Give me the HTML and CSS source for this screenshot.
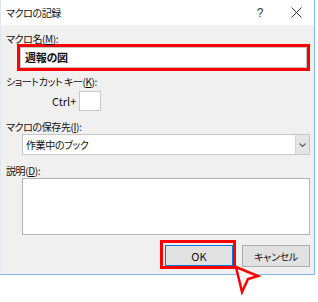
FILE: index.html
```html
<!DOCTYPE html>
<html lang="ja">
<head>
    <meta charset="UTF-8">
    <title>マクロの記録</title>
    <link rel="stylesheet" href="styles.css">
</head>
<body>
    <div class="window">
        <div class="titlebar">
            <span class="title">マクロの記録</span>
            <span class="help">?</span>
            <svg class="close" width="11" height="11" viewBox="0 0 11 11">
                <path d="M0.5 0.5 L10.5 10.5 M10.5 0.5 L0.5 10.5" stroke="#333" stroke-width="1" fill="none"/>
            </svg>
        </div>
        <div class="content">
            <div class="label">マクロ名(<u>M</u>):</div>
            <div class="mark-name">
                <div class="name-box">週報の図</div>
            </div>

            <div class="label label-key">ショートカット キー(<u>K</u>):</div>
            <div class="ctrl-row">
                <span class="ctrl-text">Ctrl+</span>
                <div class="key-box"></div>
            </div>

            <div class="label label-store">マクロの保存先(<u>I</u>):</div>
            <div class="select">
                <span class="select-text">作業中のブック</span>
                <span class="select-btn">
                    <svg width="7" height="4" viewBox="0 0 7 4">
                        <path d="M0.5 0.5 L3.5 3.5 L6.5 0.5" stroke="#606060" stroke-width="1.2" fill="none"/>
                    </svg>
                </span>
            </div>

            <div class="label label-desc">説明(<u>D</u>):</div>
            <div class="desc-box"></div>

            <div class="buttons">
                <div class="mark-ok">
                    <button class="btn btn-ok">OK</button>
                </div>
                <button class="btn btn-cancel">キャンセル</button>
            </div>
        </div>
        <svg class="pointer" width="28" height="30" viewBox="0 0 28 30">
            <polygon points="2,2 24,11 14,14 8,27" fill="#fff" stroke="#f00" stroke-width="2.5" stroke-linejoin="miter"/>
        </svg>
    </div>
</body>
</html>
```

FILE: styles.css
```css
html,
body {
    height: 302px;
}

body {
    margin: 0;
    background-color: #fff;
    font-family: "Noto Sans CJK JP", "Noto Sans", sans-serif;
    font-size: 10px;
    letter-spacing: -0.4px;
    font-feature-settings: "palt";
    color: #111;
}

.window {
    position: relative;
    width: 315px;
    height: 275px;
    box-sizing: border-box;
    border: 1px solid #7fb8ea;
    border-left-color: #dce8f5;
    border-top: none;
    background-color: #f0f0f0;
}

.titlebar {
    display: flex;
    align-items: center;
    height: 25px;
    background-color: #fff;
    padding-left: 5px;
}

.title {
    flex: 1;
}

.help {
    font-family: "Liberation Sans", sans-serif;
    font-size: 12px;
    color: #333;
    margin-right: 28px;
}

.close {
    margin-right: 12px;
}

.content {
    padding-left: 5px;
    padding-right: 4px;
}

.label {
    line-height: 11px;
    padding-top: 8px;
}

.mark-name {
    margin-left: 11px;
    border: 3px solid #f00;
}

.name-box {
    height: 19px;
    border: 1px solid #c4c4c4;
    background-color: #fff;
    font-weight: bold;
    font-size: 11px;
    letter-spacing: -0.3px;
    line-height: 19px;
    padding-left: 4px;
}

.label-key {
    padding-top: 5px;
}

.ctrl-row {
    display: flex;
    align-items: center;
    margin-top: 4px;
    padding-left: 46px;
}

.ctrl-text {
    font-size: 11px;
    letter-spacing: 0;
    margin-right: 3px;
}

.key-box {
    width: 20px;
    height: 18px;
    border: 1px solid #c8c8c8;
    background-color: #fff;
}

.label-store {
    padding-top: 10px;
}

.select {
    display: flex;
    align-items: stretch;
    height: 19px;
    margin: 2px 0 0 16px;
    border: 1px solid #c8c8c8;
    background-color: #fff;
}

.select-text {
    flex: 1;
    line-height: 19px;
    padding-left: 3px;
}

.select-btn {
    display: flex;
    align-items: center;
    justify-content: center;
    width: 13px;
    background-color: #e5e5e5;
    border-left: 1px solid #d4d4d4;
}

.label-desc {
    padding-top: 10px;
}

.desc-box {
    height: 55px;
    margin: 2px 0 0 16px;
    border: 1px solid #b4b4b4;
    background-color: #fff;
}

.buttons {
    display: flex;
    justify-content: flex-end;
    align-items: flex-start;
    margin-top: 5px;
}

.mark-ok {
    border: 3px solid #f00;
    padding: 2px 0 0 2px;
    margin-right: 6px;
}

.btn {
    width: 68px;
    height: 21px;
    box-sizing: border-box;
    background-color: #e1e1e1;
    border: 1px solid #adadad;
    font-family: "Noto Sans CJK JP", "Noto Sans", sans-serif;
    font-size: 10px;
    letter-spacing: -0.3px;
    font-feature-settings: "palt";
    color: #111;
    padding: 0;
}

.btn-ok {
    font-size: 11px;
    letter-spacing: 0;
    border: 1px solid #0078d7;
}

.btn-cancel {
    margin-top: 5px;
    height: 22px;
}

.pointer {
    position: absolute;
    left: 233px;
    top: 265px;
}
```
